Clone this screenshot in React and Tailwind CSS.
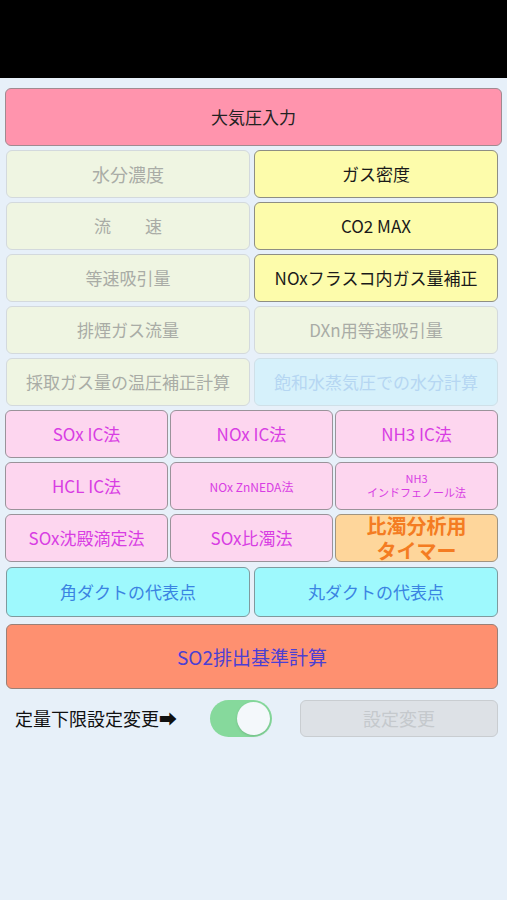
const font = { fontFamily: '"Noto Sans CJK JP", "Noto Sans", sans-serif' }

function Btn({ className = '', children }) {
  return (
    <div
      className={`flex items-center justify-center rounded-[6px] border text-center leading-tight ${className}`}
    >
      {children}
    </div>
  )
}

const off = 'border-[#d3d9dd] bg-[#eff5e2] text-[#a9aca6]'
const yellow = 'border-[#8e8e84] bg-[#fdfcab] text-[#1a1a1a]'
const pink = 'border-[#9a939a] bg-[#fdd6ef] text-[#d83de3]'
const cyan = 'border-[#7f9a9e] bg-[#9ef9fd] text-[#3a84e2]'

export default function App() {
  return (
    <div className="min-h-[900px] bg-[#e7f0f9]" style={font}>
      <div className="h-[78px] bg-black" />
      <div className="flex flex-col pl-[5px] pr-[5px] pt-[10px]">
        <Btn className="h-[58px] border-[#a08a90] bg-[#ff94ad] text-[17px] text-[#222]">大気圧入力</Btn>

        <div className="mr-[4px] mt-[4px] grid grid-cols-2 gap-x-[4px] gap-y-[4px] pl-[1px]">
          <Btn className={`h-[48px] text-[18px] ${off}`}>水分濃度</Btn>
          <Btn className={`h-[48px] text-[17px] ${yellow}`}>ガス密度</Btn>
          <Btn className={`h-[48px] text-[17px] ${off}`}>流　　速</Btn>
          <Btn className={`h-[48px] text-[17px] ${yellow}`}>CO2 MAX</Btn>
          <Btn className={`h-[48px] text-[17px] ${off}`}>等速吸引量</Btn>
          <Btn className={`h-[48px] text-[17px] ${yellow}`}>NOxフラスコ内ガス量補正</Btn>
          <Btn className={`h-[48px] text-[17px] ${off}`}>排煙ガス流量</Btn>
          <Btn className={`h-[48px] text-[17px] ${off}`}>DXn用等速吸引量</Btn>
          <Btn className={`h-[48px] text-[17px] ${off}`}>採取ガス量の温圧補正計算</Btn>
          <Btn className="h-[48px] border-[#cfe0e8] bg-[#d6f1fb] text-[17px] text-[#b5d6f2]">飽和水蒸気圧での水分計算</Btn>
        </div>

        <div className="mr-[4px] mt-[4px] grid grid-cols-3 gap-x-[2px] gap-y-[4px]">
          <Btn className={`h-[48px] text-[17px] ${pink}`}>SOx IC法</Btn>
          <Btn className={`h-[48px] text-[17px] ${pink}`}>NOx IC法</Btn>
          <Btn className={`h-[48px] text-[17px] ${pink}`}>NH3 IC法</Btn>
          <Btn className={`h-[48px] text-[17px] ${pink}`}>HCL IC法</Btn>
          <Btn className={`h-[48px] text-[12px] ${pink}`}>NOx ZnNEDA法</Btn>
          <Btn className={`h-[48px] flex-col text-[11px] leading-[16px] ${pink}`}>
            <span>NH3</span>
            <span>インドフェノール法</span>
          </Btn>
          <Btn className={`h-[48px] text-[17px] ${pink}`}>SOx沈殿滴定法</Btn>
          <Btn className={`h-[48px] text-[17px] ${pink}`}>SOx比濁法</Btn>
          <Btn className="h-[48px] flex-col border-[#a09480] bg-[#fed69b] text-[20px] font-bold leading-[23px] text-[#f47c22]">
            <span>比濁分析用</span>
            <span>タイマー</span>
          </Btn>
        </div>

        <div className="mr-[4px] mt-[5px] grid grid-cols-2 gap-x-[4px] pl-[1px]">
          <Btn className={`h-[50px] text-[17px] ${cyan}`}>角ダクトの代表点</Btn>
          <Btn className={`h-[50px] text-[17px] ${cyan}`}>丸ダクトの代表点</Btn>
        </div>

        <Btn className="mr-[4px] ml-[1px] mt-[7px] h-[65px] border-[#9a8077] bg-[#fe9070] text-[19px] text-[#4b3fd4]">
          SO2排出基準計算
        </Btn>

        <div className="mr-[4px] mt-[11px] flex items-center">
          <span className="ml-[10px] w-[195px] text-[18px] text-[#111]">定量下限設定変更➡</span>
          <div className="flex h-[37px] w-[62px] items-center justify-end rounded-full bg-[#86d99c] pr-[2px]">
            <div className="h-[33px] w-[33px] rounded-full bg-[#f4f8fb] shadow" />
          </div>
          <div className="ml-[28px] flex h-[37px] flex-1 items-center justify-center rounded-[6px] border border-[#c9cdd1] bg-[#dde1e6] text-[18px] text-[#c5c9cd]">
            設定変更
          </div>
        </div>
      </div>
    </div>
  )
}
